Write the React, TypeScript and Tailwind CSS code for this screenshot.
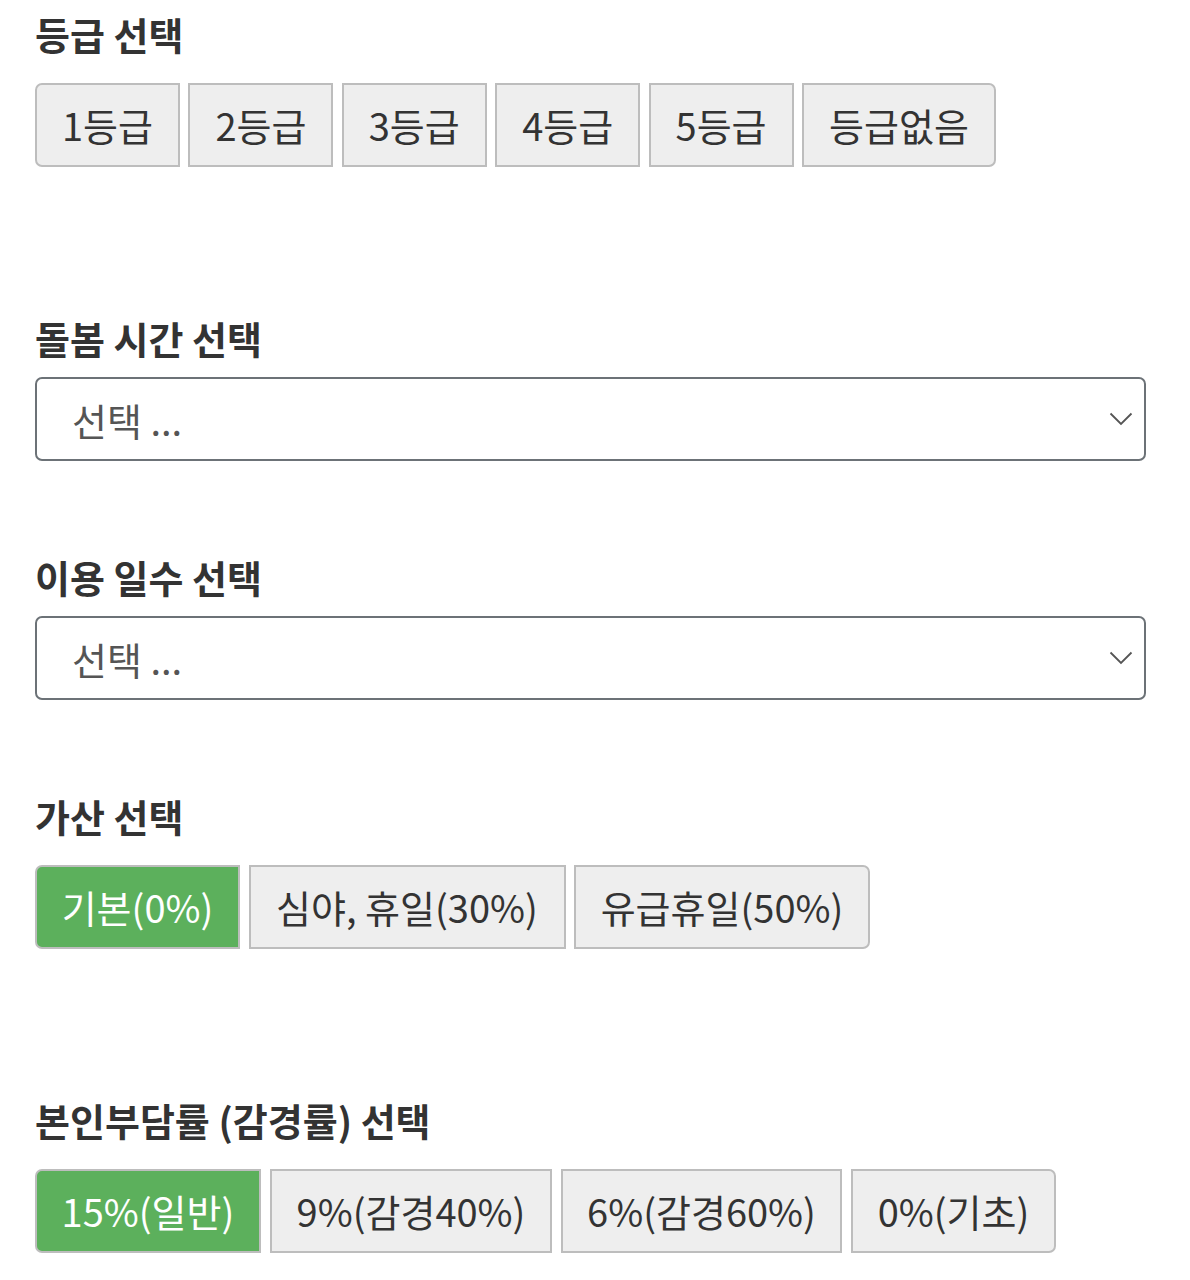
import React, { useState } from 'react';

const FONT = "font-['Noto_Sans_CJK_KR','Noto_Sans',sans-serif]";

type Opt = { label: string; w: string };

const gradeOpts: Opt[] = [
    { label: '1등급', w: 'w-[145px]' },
    { label: '2등급', w: 'w-[145px]' },
    { label: '3등급', w: 'w-[145px]' },
    { label: '4등급', w: 'w-[145px]' },
    { label: '5등급', w: 'w-[145px]' },
    { label: '등급없음', w: 'w-[194px]' },
];

const extraOpts: Opt[] = [
    { label: '기본(0%)', w: 'w-[205px]' },
    { label: '심야, 휴일(30%)', w: 'w-[317px]' },
    { label: '유급휴일(50%)', w: 'w-[296px]' },
];

const rateOpts: Opt[] = [
    { label: '15%(일반)', w: 'w-[226px]' },
    { label: '9%(감경40%)', w: 'w-[282px]' },
    { label: '6%(감경60%)', w: 'w-[281px]' },
    { label: '0%(기초)', w: 'w-[205px]' },
];

function Title({ children }: { children: React.ReactNode }) {
    // 48px line box + 4px bottom pad keeps the block 52px tall but lifts the glyphs a little
    return (
        <h2 className="text-[38px] leading-[48px] pb-[4px] font-bold text-[#333]">{children}</h2>
    );
}

function ButtonGroup({ opts, active, onPick, gap = 'gap-[8.4px]' }: { opts: Opt[]; active: number | null; onPick: (i: number) => void; gap?: string }) {
    return (
        <div className={`flex ${gap} mt-[21px]`}>
            {opts.map((o, i) => {
                const on = active === i;
                return (
                    <button
                        key={o.label}
                        onClick={() => onPick(i)}
                        className={[
                            'h-[84px] border-2 border-[#bdbdbd] text-[38px] leading-none font-normal flex items-center justify-center whitespace-nowrap',
                            o.w,
                            on ? 'bg-[#5cb05c] text-white' : 'bg-[#eeeeee] text-[#333]',
                            i === 0 ? 'rounded-l-[7px]' : '',
                            i === opts.length - 1 ? 'rounded-r-[7px]' : '',
                        ].join(' ')}
                    >
                        {o.label}
                    </button>
                );
            })}
        </div>
    );
}

function SelectBox() {
    return (
        <div className="relative mt-[11px] w-[1111px]">
            <select
                defaultValue=""
                className="appearance-none w-full h-[84px] border-2 border-[#6c7277] rounded-[7px] bg-white pl-[35px] text-[38px] text-[#555] outline-none"
            >
                <option value="">선택 ...</option>
            </select>
            <svg
                className="pointer-events-none absolute right-[13px] top-[35px]"
                width="24"
                height="14"
                viewBox="0 0 24 14"
                fill="none"
                stroke="#555"
                strokeWidth="1.8"
            >
                <path d="M1.5 1.5 L12 12 L22.5 1.5" />
            </svg>
        </div>
    );
}

export default function App() {
    const [grade, setGrade] = useState<number | null>(null);
    const [extra, setExtra] = useState<number | null>(0);
    const [rate, setRate] = useState<number | null>(0);

    return (
        <div className={`${FONT} bg-white min-h-[1280px] pl-[35px] pt-[10px]`}>
            <section>
                <Title>등급 선택</Title>
                <ButtonGroup opts={gradeOpts} active={grade} onPick={setGrade} />
            </section>

            <section className="mt-[147px]">
                <Title>돌봄 시간 선택</Title>
                <SelectBox />
            </section>

            <section className="mt-[92px]">
                <Title>이용 일수 선택</Title>
                <SelectBox />
            </section>

            <section className="mt-[92px]">
                <Title>가산 선택</Title>
                <ButtonGroup opts={extraOpts} active={extra} onPick={setExtra} gap="gap-[8.5px]" />
            </section>

            <section className="mt-[147px]">
                <Title>본인부담률 (감경률) 선택</Title>
                <ButtonGroup opts={rateOpts} active={rate} onPick={setRate} gap="gap-[9px]" />
            </section>
        </div>
    );
}
